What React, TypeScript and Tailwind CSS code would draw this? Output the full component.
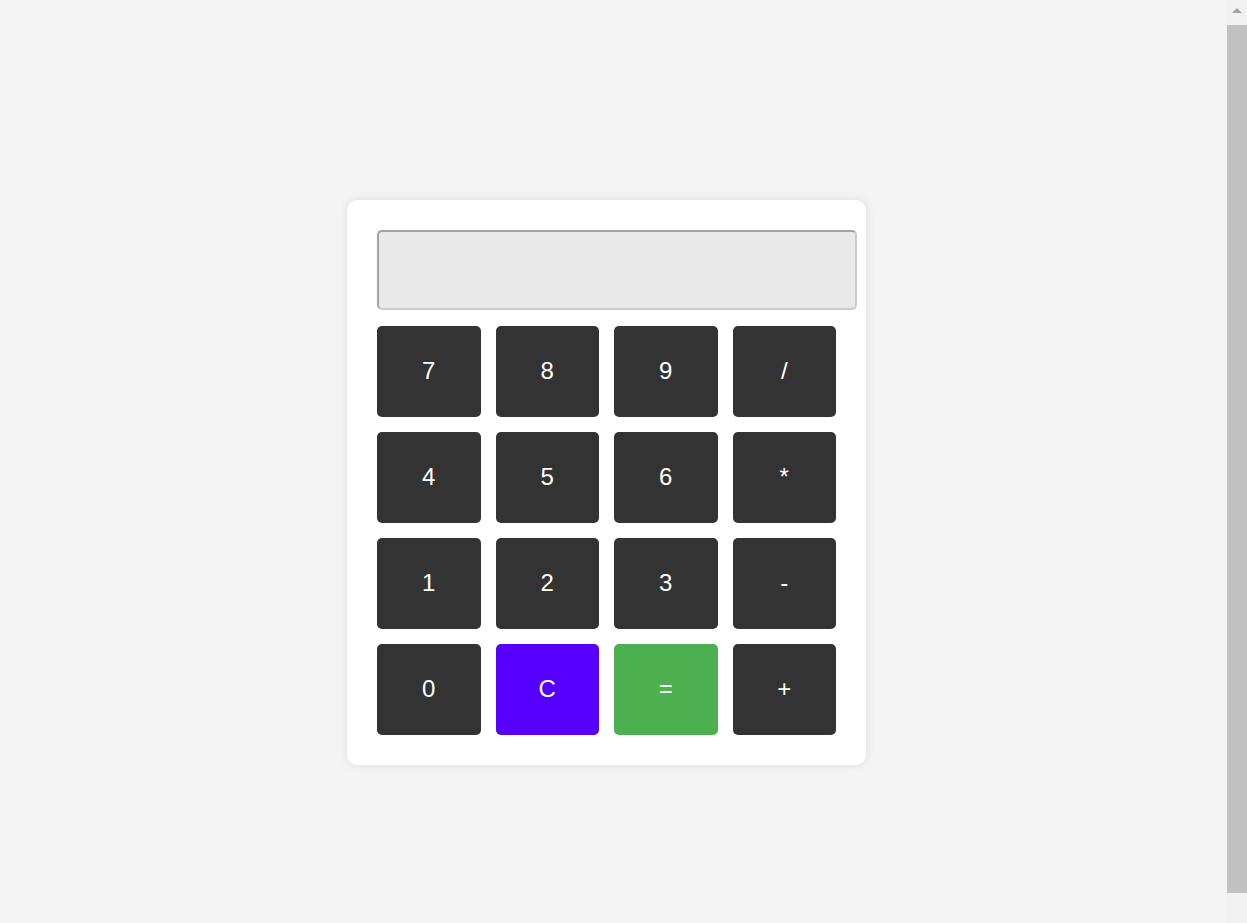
const keys = ['7', '8', '9', '/', '4', '5', '6', '*', '1', '2', '3', '-', '0', 'C', '=', '+']

function keyColor(k: string) {
  if (k === 'C') return 'bg-[#5500ff]'
  if (k === '=') return 'bg-[#4caf50]'
  return 'bg-[#333333]'
}

export default function App() {
  return (
    <div className="flex h-[923px] bg-[#f4f4f4] font-['Liberation_Sans',Arial,sans-serif]">
      <main className="flex flex-1 items-center justify-center pt-[41px] pr-[14px]">
        <div className="w-[519px] rounded-[10px] bg-white p-[30px] shadow-[0_0_10px_rgba(0,0,0,0.1)]">
          <input
            type="text"
            readOnly
            className="mb-[16px] block h-[80px] w-[480px] rounded-[5px] border-2 border-t-[#a3a3a3] border-r-[#cbcbcb] border-b-[#cbcbcb] border-l-[#a3a3a3] bg-[#e9e9e9] px-[10px] text-right text-[24px] outline-none"
          />
          <div className="grid grid-cols-4 gap-[15px]">
            {keys.map((k) => (
              <button
                key={k}
                className={`flex h-[91px] items-center justify-center rounded-[5px] text-[24px] text-white ${keyColor(k)}`}
              >
                {k}
              </button>
            ))}
          </div>
        </div>
      </main>
      {/* scrollbar strip */}
      <aside className="flex w-[20px] flex-col bg-[#f1f1f1]">
        <div className="flex h-[25px] items-start justify-center pt-[8px]">
          <div className="h-0 w-0 border-x-[5px] border-b-[5px] border-x-transparent border-b-[#a3a3a3]" />
        </div>
        <div className="h-[868px] bg-[#c1c1c1]" />
      </aside>
    </div>
  )
}
